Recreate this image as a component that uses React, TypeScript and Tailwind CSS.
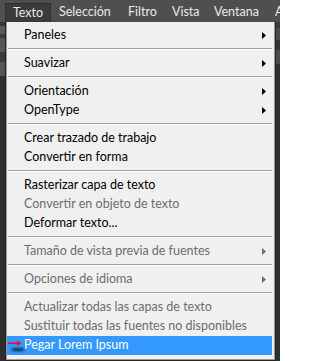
import React from "react";

type Row =
  | { kind: "sep" }
  | { kind: "item"; label: string; disabled?: boolean; sub?: boolean; active?: boolean };

const rows: Row[] = [
  { kind: "item", label: "Paneles", sub: true },
  { kind: "sep" },
  { kind: "item", label: "Suavizar", sub: true },
  { kind: "sep" },
  { kind: "item", label: "Orientación", sub: true },
  { kind: "item", label: "OpenType", sub: true },
  { kind: "sep" },
  { kind: "item", label: "Crear trazado de trabajo" },
  { kind: "item", label: "Convertir en forma" },
  { kind: "sep" },
  { kind: "item", label: "Rasterizar capa de texto" },
  { kind: "item", label: "Convertir en objeto de texto", disabled: true },
  { kind: "item", label: "Deformar texto..." },
  { kind: "sep" },
  { kind: "item", label: "Tamaño de vista previa de fuentes", disabled: true, sub: true },
  { kind: "sep" },
  { kind: "item", label: "Opciones de idioma", disabled: true, sub: true },
  { kind: "sep" },
  { kind: "item", label: "Actualizar todas las capas de texto", disabled: true },
  { kind: "item", label: "Sustituir todas las fuentes no disponibles", disabled: true },
  { kind: "item", label: "Pegar Lorem Ipsum", active: true },
];

const bar = [
  { label: "Texto", w: "w-[46px]", pl: "pl-[7px]", open: true },
  { label: "Selección", w: "w-[69px]", pl: "pl-2" },
  { label: "Filtro", w: "w-[44px]", pl: "pl-2" },
  { label: "Vista", w: "w-[42px]", pl: "pl-2" },
  { label: "Ventana", w: "w-[61px]", pl: "pl-2" },
  { label: "A", w: "w-[13px]", pl: "pl-2" },
];

function SubArrow({ disabled }: { disabled?: boolean }) {
  return (
    <svg width="4" height="7" viewBox="0 0 4 7" className="shrink-0">
      <polygon points="0,0 4,3.5 0,7" fill={disabled ? "#6d6d6d" : "#000"} />
    </svg>
  );
}

function PasteArrow() {
  return (
    <svg width="20" height="14" viewBox="0 0 20 14" className="absolute left-0 top-[3px]">
      <defs>
        <filter id="blur" x="-50%" y="-100%" width="200%" height="300%">
          <feGaussianBlur stdDeviation="1.2" />
        </filter>
      </defs>
      <ellipse cx="11" cy="10.5" rx="7" ry="1.8" fill="#10203a" opacity="0.85" filter="url(#blur)" />
      <rect x="1" y="3.5" width="11" height="1.6" fill="#e3161d" />
      <polygon points="10,1.8 15,4.3 10,6.8" fill="#e3161d" />
    </svg>
  );
}

export default function App() {
  return (
    <div className="relative w-[280px] h-[361px] overflow-hidden bg-[#2d2d2d] font-['Lato',sans-serif] text-[12.5px] leading-none">
      {/* menu bar */}
      <div className="flex h-[22px] items-end overflow-hidden bg-[#4f4f4f] pl-[5px] text-[#e8e8e8]">
        {bar.map((b) => (
          <div
            key={b.label}
            className={`${b.w} ${b.pl} flex h-[19px] shrink-0 items-center whitespace-nowrap ${
              b.open ? "border border-b-0 border-[#2f2f2f] bg-[#3b3b3b]" : ""
            }`}
          >
            {b.label}
          </div>
        ))}
      </div>

      <div className="flex h-[339px]">
        {/* panels behind, left */}
        <div className="flex w-[5px] flex-col">
          <div className="h-[4px] bg-[#383838]" />
          <div className="h-[8px] bg-[#5a5a5a]" />
          <div className="h-[4px] bg-[#3c3c3c]" />
          <div className="h-[14px] bg-[#565656]" />
          <div className="h-[10px] bg-[#3a3a3a]" />
          <div className="h-[14px] bg-[#555555]" />
          <div className="flex-1 bg-[#2f2f2f]" />
        </div>

        {/* dropdown */}
        <div className="w-[271px] border border-t-0 border-[#252525] shadow-[2px_2px_3px_rgba(0,0,0,0.5)]">
          <div className="flex h-full flex-col border border-t-0 border-[#9a9a9a] bg-[#f0f0f0] pt-[4px]">
            {rows.map((r, i) =>
              r.kind === "sep" ? (
                <div key={i} className="h-[9px] pt-[3px] pl-[1px] pr-[2px]">
                  <div className="h-px bg-[#a0a0a0]" />
                  <div className="h-px bg-white" />
                </div>
              ) : (
                <div
                  key={i}
                  className={`relative mr-[2px] flex h-[19px] shrink-0 items-center pl-[17px] pr-[6px] whitespace-nowrap ${
                    r.active ? "bg-[#3399ff] text-white" : r.disabled ? "text-[#6d6d6d]" : "text-black"
                  }`}
                >
                  {r.active && <PasteArrow />}
                  <span className="flex-1">{r.label}</span>
                  {r.sub && <SubArrow disabled={r.disabled} />}
                </div>
              )
            )}
          </div>
        </div>

        {/* panels behind, right */}
        <div className="flex flex-1 flex-col">
          <div className="h-[6px] bg-[#3a3a3a]" />
          <div className="h-[12px] bg-[#4c4c4c]" />
          <div className="h-[10px] bg-[#353535]" />
          <div className="h-[14px] bg-[#4a4a4a]" />
          <div className="flex-1 bg-[#2f2f2f]" />
          <div className="h-[4px] bg-[#1f3a2a]" />
        </div>
      </div>
    </div>
  );
}
